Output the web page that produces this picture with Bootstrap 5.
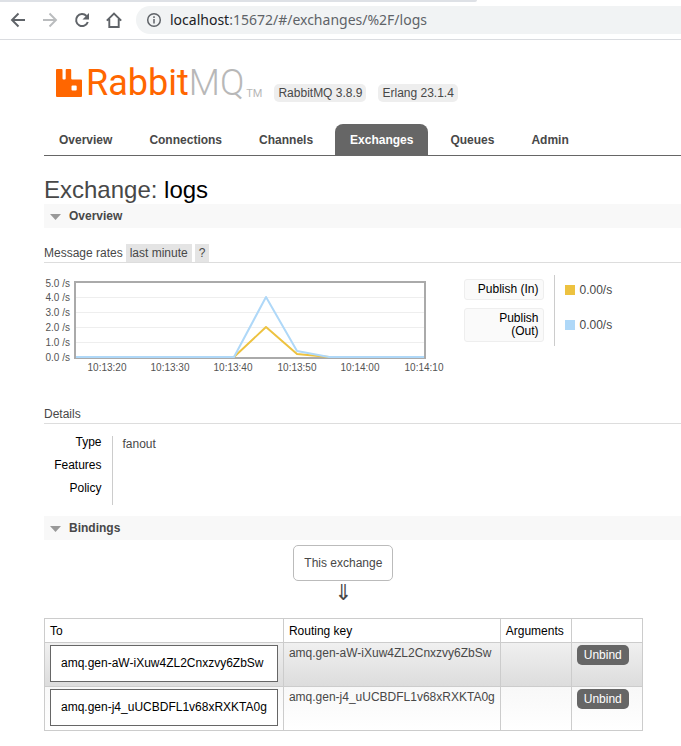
<!DOCTYPE html>
<html lang="en">
<head>
<meta charset="utf-8">
<meta name="viewport" content="width=device-width, initial-scale=1">
<title>RabbitMQ Management</title>
<link rel="stylesheet" href="https://cdn.jsdelivr.net/npm/bootstrap@5.3.0/dist/css/bootstrap.min.css">
<style>
body { font: 12px/16px "Liberation Sans", Arial, sans-serif; color: #484848; background: #fff; overflow-x: hidden; }
.tabstrip { height: 2px; width: 70%; background: #dee1e6; border-bottom-right-radius: 2px; }
.toolbar { height: 38px; padding: 4px 0 5px 10px; border-bottom: 1px solid #dadce0; }
.tool-btn { width: 16px; height: 16px; line-height: 0; }
.tool-btn svg, .address svg { display: block; }
.address { height: 28px; margin-left: 14px; padding-left: 10px; gap: 8px; background: #f1f3f4; border-radius: 14px 0 0 14px; }
.url { font: 14px/20px "Noto Sans", "Open Sans", sans-serif; color: #5f6368; }
.url b { font-weight: 400; color: #202124; }
.page { padding-left: 44px; }
.masthead { height: 84px; padding: 25px 0 0 12px; }
.wordmark { font: 400 36px/36px Roboto, sans-serif; color: #f60; text-decoration: none; }
.wordmark .mq { color: #b8b8b8; font-weight: 300; }
.wordmark .tm { font-size: 11px; line-height: 14px; color: #b8b8b8; padding-left: 2px; }
.version { background: #eee; border-radius: 5px; padding: 1px 4px; line-height: 16px; margin-top: 3px; }
.main-tabs { gap: 7px; border-bottom: 1px solid #666; }
.main-tabs .nav-link { padding: 8px 15px 7px; color: #484848; font-weight: 700; border-radius: 8px 8px 0 0; }
.main-tabs .nav-link.active { background: #666; color: #fff; }
.title { font-size: 24px; line-height: 28px; font-weight: 400; padding-top: 20px; }
.title b { color: #000; font-weight: 400; }
.section-bar { background: #f8f8f8; padding: 4px 6px; }
.section-bar .btn { font-size: 12px; line-height: 16px; gap: 8px; font-weight: 700; color: #484848; }
.section-bar svg { margin-top: 2px; }
.caption-line { font-size: 12px; line-height: 18px; font-weight: 400; border-bottom: 1px solid #ddd; gap: 3px; }
.chip { background: #e4e4e4; padding: 0 4px; color: #484848; line-height: 18px; }
.axis { font-size: 10px; fill: #545454; }
.facts th { font-weight: 400; color: #000; text-align: right; }
.facts td { border-left: 1px solid #ccc; padding-left: 10px; }
.legend-wrap { padding-left: 18px; }
.legend th { width: 90px; padding: 4px 10px 4px 0; }
.legend-label { border: 1px solid #eee; background: #fafafa; border-radius: 3px; padding: 3px 4px; line-height: 13px; }
.swatch { width: 10px; height: 10px; margin-right: 5px; }
.in { background: #edc240; }
.out { background: #afd8f8; }
.details-head { margin-top: 30px; }
.details { margin: 12px 0 11px; }
.details th { width: 68px; padding: 0 10px 0 0; vertical-align: top; line-height: 13px; }
.details tr { height: 23px; }
.details td { vertical-align: top; line-height: 14px; }
.node { border: 1px solid #bbb; border-radius: 5px; padding: 9px 10px; }
.bindings { padding-top: 5px; }
.arrow { font: 22px/24px "DejaVu Sans", sans-serif; }
.grid-table { margin-top: 13px; }
.grid-table th, .grid-table td { border: 1px solid #ccc; vertical-align: top; }
.grid-table th { font-weight: 400; color: #000; padding: 4px 5px 3px; }
.grid-table td { padding: 2px 5px 4px; }
.grid-table .dark-row { background: linear-gradient(#f0f0f0, #dcdcdc); }
.grid-table .light-row { background: linear-gradient(#f8f8f8, #fff); }
.c-args, .c-act { width: 71px; }
.queue { border: 1px solid #666; background: #fff; color: #000; padding: 9px 10px 10px; line-height: 16px; }
.unbind { font-size: 12px; line-height: 16px; color: #fff; background: #666; border: 0; border-radius: 5px; padding: 2px 7px; }
</style>
</head>
<body>
<header>
  <div class="tabstrip"></div>
  <div class="toolbar d-flex align-items-center">
    <div class="d-flex gap-3">
      <button class="btn p-0 border-0 tool-btn" aria-label="Back"><svg width="16" height="16" fill="none" stroke="#5f6368" stroke-width="1.9"><path d="M15 8H2.5M8.5 1.5L2 8l6.5 6.500"/></svg></button>
      <button class="btn p-0 border-0 tool-btn" aria-label="Forward"><svg width="16" height="16" fill="none" stroke="#babcbe" stroke-width="1.900"><path d="M1 8h12.500M7.500 1.500L14 8l-6.500 6.500"/></svg></button>
      <button class="btn p-0 border-0 tool-btn" aria-label="Reload"><svg width="16" height="16" fill="none" stroke="#5f6368" stroke-width="2"><path d="M13.800 10A6 6 0 1 1 12.500 4"/><path d="M15 1v6.500H8.500z" fill="#5f6368" stroke="none"/></svg></button>
      <button class="btn p-0 border-0 tool-btn" aria-label="Home"><svg width="16" height="16" fill="none" stroke="#5f6368" stroke-width="1.900"><path d="M.8 8.600L8 1.500l7.200 7.100M3.300 7v8h9.400V7"/></svg></button>
    </div>
    <div class="address flex-grow-1 d-flex align-items-center">
      <svg width="16" height="16" fill="none" stroke="#5f6368" stroke-width="1.500"><circle cx="8" cy="8" r="6.300"/><path d="M8 7v4.500M8 4.300v1.700"/></svg>
      <span class="url"><b>localhost</b>:15672/#/exchanges/%2F/logs</span>
    </div>
  </div>
</header>

<div class="page">
  <div class="masthead d-flex align-items-start">
    <a href="#" class="wordmark d-flex align-items-start">
      <svg class="me-1" width="26" height="34" aria-hidden="true"><path fill="#f60" fill-rule="evenodd" d="M1 4h4.500q1 0 1 1v8.500q0 1 1 1h1.200q1 0 1-1V5q0-1 1-1h3.500q1 0 1 1v8.500q0 1 1 1H25q1 0 1 1V31q0 1-1 1H1q-1 0-1-1V5q0-1 1-1zM16.500 20.500q-1 0-1 1v3q0 1 1 1h3.200q1 0 1-1v-3q0-1-1-1z"/></svg>
      <span>Rabbit<span class="mq">MQ</span></span><span class="tm align-self-end">TM</span>
    </a>
    <div class="d-flex gap-2 mt-3 ps-2 ms-1">
      <span class="version me-1">RabbitMQ 3.8.9</span>
      <span class="version">Erlang 23.1.4</span>
    </div>
  </div>

  <nav class="main-tabs nav">
    <a class="nav-link" href="#">Overview</a>
    <a class="nav-link" href="#">Connections</a>
    <a class="nav-link" href="#">Channels</a>
    <a class="nav-link active" aria-current="page" href="#">Exchanges</a>
    <a class="nav-link" href="#">Queues</a>
    <a class="nav-link" href="#">Admin</a>
  </nav>

  <main>
    <h1 class="title mb-0">Exchange: <b>logs</b></h1>

    <h2 class="section-bar mb-0"><button class="btn p-0 border-0 d-flex align-items-center"><svg width="11" height="6"><path fill="#999" d="M0 0h11L5.500 6z"/></svg>Overview</button></h2>

    <h3 class="caption-line d-flex mt-3 mb-0">
      <span>Message rates</span>
      <a href="#" class="chip text-decoration-none">last minute</a>
      <a href="#" class="chip text-decoration-none">?</a>
    </h3>

    <div class="d-flex mt-2 pt-1">
      <svg width="402" height="100" class="flex-shrink-0" role="img" aria-label="Message rates chart">
        <g stroke="#eee"><path d="M31 22.500h350M31 37.500h350M31 52.500h350M31 67.500h350"/></g>
        <rect x="31" y="7" width="350" height="76" fill="none" stroke="#aaa" stroke-width="2"/>
        <g fill="none" stroke-width="2" stroke-linejoin="round">
          <path stroke="#edc240" d="M32 82H190L222 52L253 79L285 82H380"/>
          <path stroke="#afd8f8" d="M32 82H190L222 22L253 76L285 82H380"/>
        </g>
        <g class="axis" text-anchor="end">
          <text x="26" y="12">5.0 /s</text><text x="26" y="26">4.0 /s</text><text x="26" y="41">3.0 /s</text>
          <text x="26" y="56">2.0 /s</text><text x="26" y="71">1.0 /s</text><text x="26" y="86">0.0 /s</text>
        </g>
        <g class="axis" text-anchor="middle">
          <text x="63" y="96">10:13:20</text><text x="126" y="96">10:13:30</text><text x="189" y="96">10:13:40</text>
          <text x="253" y="96">10:13:50</text><text x="316" y="96">10:14:00</text><text x="380" y="96">10:14:10</text>
        </g>
      </svg>
      <div class="legend-wrap">
        <table class="facts legend">
          <tr><th scope="row"><div class="legend-label">Publish (In)</div></th><td><div class="d-flex align-items-center"><span class="swatch in"></span>0.00/s</div></td></tr>
          <tr><th scope="row"><div class="legend-label">Publish<br>(Out)</div></th><td><div class="d-flex align-items-center"><span class="swatch out"></span>0.00/s</div></td></tr>
        </table>
      </div>
    </div>

    <h3 class="caption-line details-head mb-0">Details</h3>
    <table class="facts details">
      <tr><th scope="row">Type</th><td>fanout</td></tr>
      <tr><th scope="row">Features</th><td></td></tr>
      <tr><th scope="row">Policy</th><td></td></tr>
    </table>

    <h2 class="section-bar mb-0"><button class="btn p-0 border-0 d-flex align-items-center"><svg width="11" height="6"><path fill="#999" d="M0 0h11L5.500 6z"/></svg>Bindings</button></h2>

    <div class="bindings d-inline-flex flex-column align-items-center">
      <div class="node">This exchange</div>
      <div class="arrow">⇓</div>
      <table class="grid-table">
        <thead><tr><th>To</th><th>Routing key</th><th class="c-args">Arguments</th><th class="c-act"></th></tr></thead>
        <tbody>
          <tr class="dark-row"><td><a href="#" class="queue d-block text-decoration-none">amq.gen-aW-iXuw4ZL2Cnxzvy6ZbSw</a></td><td>amq.gen-aW-iXuw4ZL2Cnxzvy6ZbSw</td><td></td><td><button class="unbind">Unbind</button></td></tr>
          <tr class="light-row"><td><a href="#" class="queue d-block text-decoration-none">amq.gen-j4_uUCBDFL1v68xRXKTA0g</a></td><td>amq.gen-j4_uUCBDFL1v68xRXKTA0g</td><td></td><td><button class="unbind">Unbind</button></td></tr>
        </tbody>
      </table>
    </div>
  </main>
</div>
<script src="https://cdn.jsdelivr.net/npm/bootstrap@5.3.0/dist/js/bootstrap.bundle.min.js"></script>
</body>
</html>
